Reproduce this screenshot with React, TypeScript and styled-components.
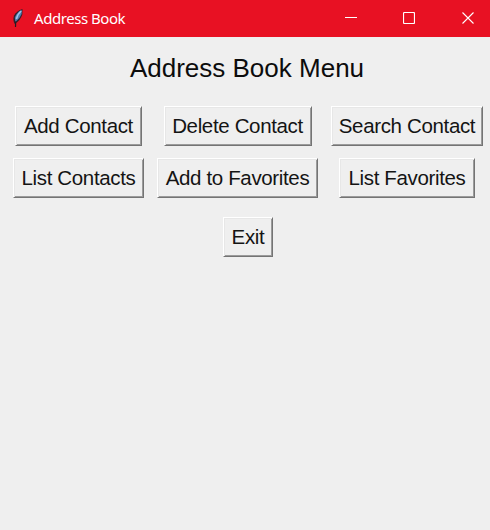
import React from "react";
import styled, { createGlobalStyle } from "styled-components";

const GlobalStyle = createGlobalStyle`
  body { margin: 0; background: #efefef; }
`;

const AppWindow = styled.div`
  box-sizing: border-box;
  width: 490px;
  height: 530px;
  background: #efefef;
  overflow: hidden;
`;

const TitleBar = styled.header`
  display: flex;
  align-items: center;
  height: 37px;
  background: #e81123;
  color: #fff;
`;

const FeatherIcon = styled.svg`
  width: 12px;
  height: 22px;
  margin: 0 10px 4px 12px;
  flex: none;
`;

const WindowTitle = styled.span`
  flex: 1;
  font: 15px/20px "Noto Sans", "Open Sans", sans-serif;
  letter-spacing: -0.45px;
  white-space: nowrap;
  padding-bottom: 2px;
`;

const Controls = styled.div`
  display: flex;
  margin-right: -7px;
`;

const ControlButton = styled.button`
  display: flex;
  align-items: center;
  justify-content: center;
  width: 58.5px;
  height: 37px;
  padding: 0 0 1px;
  border: 0;
  background: none;
  color: #fff;
`;

const Heading = styled.h1`
  margin: 15px 0 0 4px;
  font: 400 26px/32px "Liberation Sans", Arial, sans-serif;
  text-align: center;
  color: #0c0c0c;
`;

const Actions = styled.main`
  display: grid;
  grid-template-columns: 131px 161px 152px;
  grid-auto-rows: 40px;
  column-gap: 13px;
  row-gap: 12px;
  justify-items: center;
  width: 470px;
  margin: 22px 0 0 13px;
`;

const ActionButton = styled.button<{ $width: number }>`
  box-sizing: border-box;
  width: ${(p) => p.$width}px;
  height: 40px;
  padding: 0 0 1px;
  border: 1px solid;
  border-color: #fff #747474 #747474 #fff;
  box-shadow: inset 1px 1px 0 #e7e7e7, inset -1px -1px 0 #9b9b9b;
  background: #efefef;
  color: #141414;
  font: 20.5px/37px "Liberation Sans", Arial, sans-serif;
  letter-spacing: -0.35px;
  text-align: center;
  white-space: nowrap;
`;

const Footer = styled.footer`
  display: flex;
  justify-content: center;
  margin: 19px 0 0 6px;
`;

const actions = [
  { label: "Add Contact", width: 127 },
  { label: "Delete Contact", width: 148 },
  { label: "Search Contact", width: 152 },
  { label: "List Contacts", width: 131 },
  { label: "Add to Favorites", width: 161 },
  { label: "List Favorites", width: 136 },
];

export default function App() {
  return (
    <AppWindow>
      <GlobalStyle />
      <TitleBar>
        <FeatherIcon viewBox="0 0 12 22" aria-hidden="true">
          <path d="M10.5 3 Q5 4.5 2 9.5 Q0.5 14.5 2.7 18 Q8.5 14.5 10.3 8.5 Z" fill="#33202b" />
          <path d="M9.8 4 Q5 6 2.8 11.5 L3.4 16 Q8 12.5 9.6 8 Z" fill="#4f7eb2" />
          <path d="M9.2 5 Q5.5 8 4.4 13" stroke="#9fc4e6" strokeWidth="1.6" fill="none" />
          <path d="M3.7 15.5 L3.5 21" stroke="#251b22" strokeWidth="1.2" fill="none" />
        </FeatherIcon>
        <WindowTitle>Address Book</WindowTitle>
        <Controls>
          <ControlButton aria-label="Minimize">
            <svg width="12" height="12"><path d="M0 5.5H12" stroke="currentColor" /></svg>
          </ControlButton>
          <ControlButton aria-label="Maximize">
            <svg width="12" height="12"><rect x=".5" y=".5" width="11" height="11" rx="1" fill="none" stroke="currentColor" strokeWidth="1.2" /></svg>
          </ControlButton>
          <ControlButton aria-label="Close">
            <svg width="12" height="12"><path d="M.5 .5L11.5 11.5M11.5 .5L.5 11.5" stroke="currentColor" strokeWidth="1.1" /></svg>
          </ControlButton>
        </Controls>
      </TitleBar>
      <Heading>Address Book Menu</Heading>
      <Actions>
        {actions.map((a) => (
          <ActionButton key={a.label} $width={a.width}>{a.label}</ActionButton>
        ))}
      </Actions>
      <Footer>
        <ActionButton $width={50}>Exit</ActionButton>
      </Footer>
    </AppWindow>
  );
}
